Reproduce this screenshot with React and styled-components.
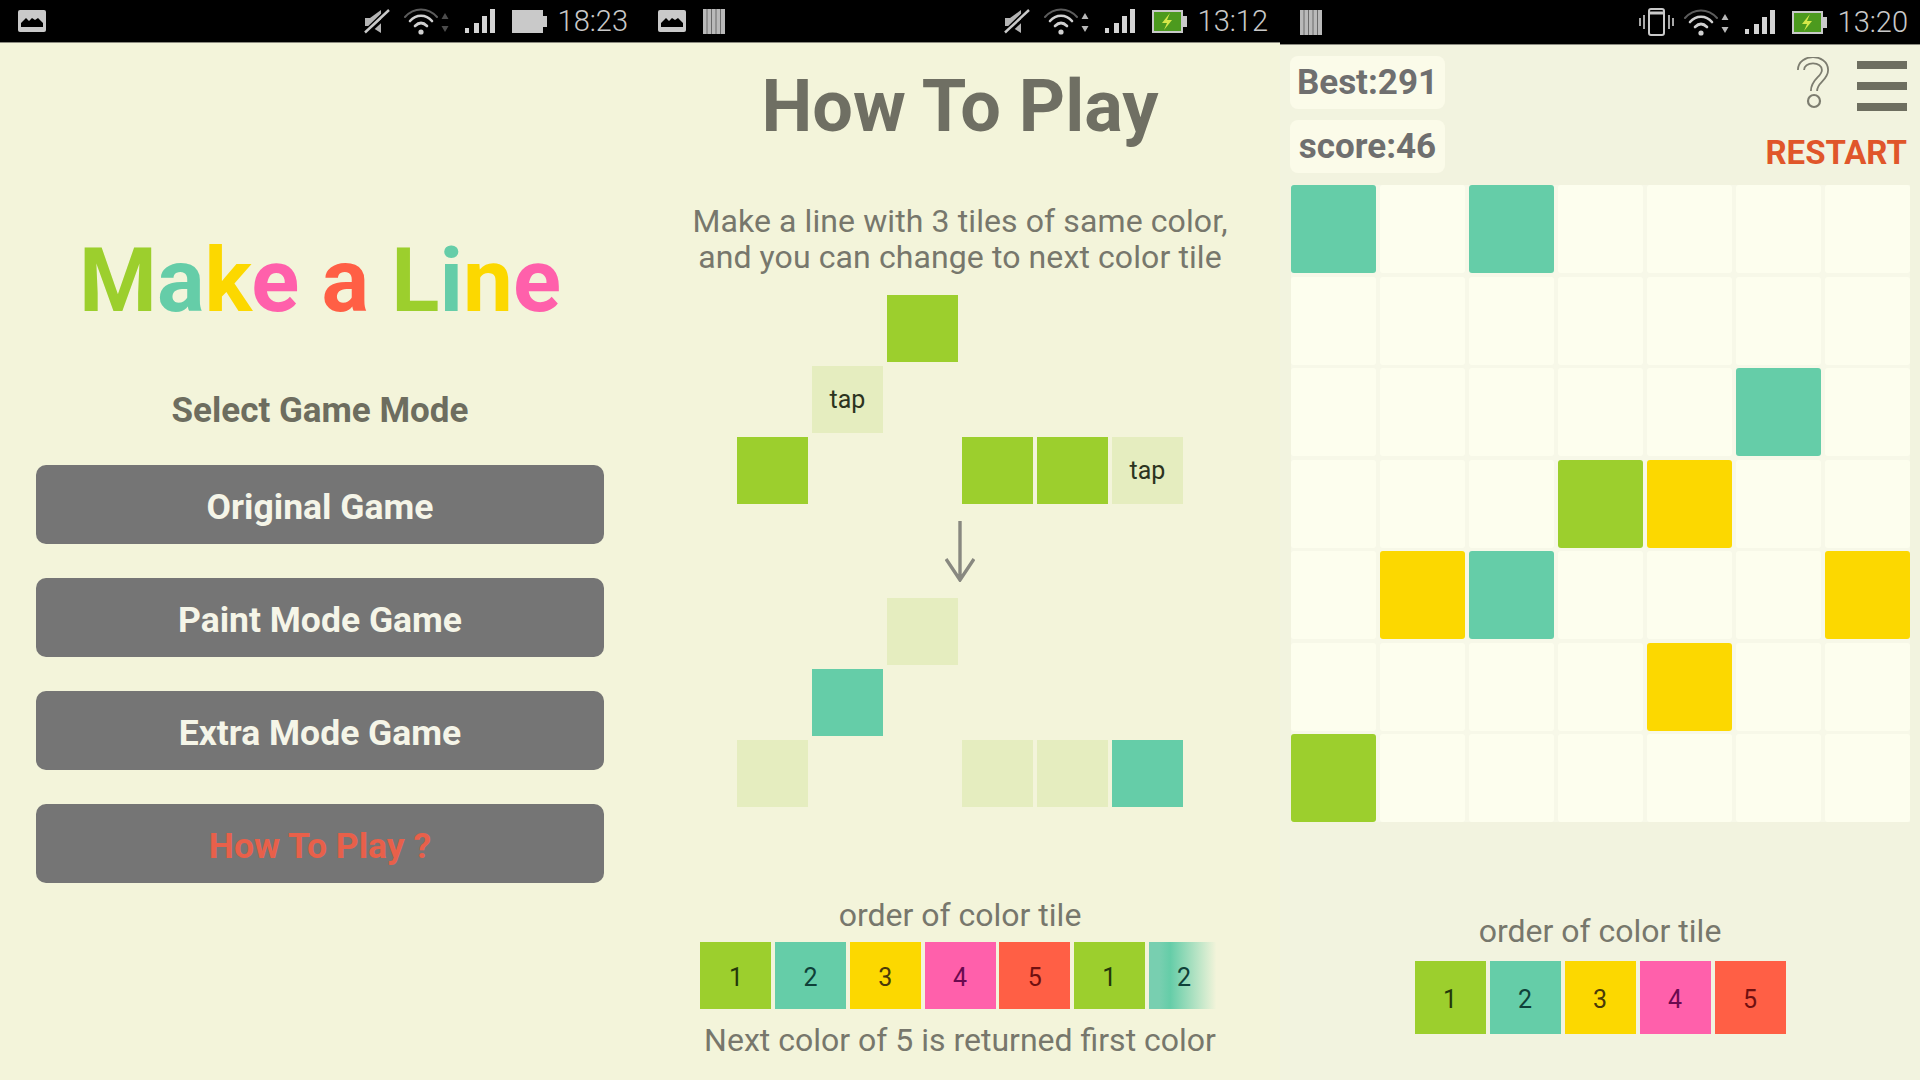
import styled, { createGlobalStyle } from "styled-components";

const GREEN = "#9ccf2d";
const TEAL = "#65cda8";
const YELLOW = "#fcd800";
const PINK = "#ff60ab";
const RED = "#ff5f45";
const PALE = "#e5edbf";

const tileColors = { g: GREEN, t: TEAL, y: YELLOW, p: PINK, r: RED, e: PALE };

const titleLetters = [
  ["M", GREEN],
  ["a", TEAL],
  ["k", YELLOW],
  ["e", PINK],
  [" ", GREEN],
  ["a", RED],
  [" ", GREEN],
  ["L", GREEN],
  ["i", TEAL],
  ["n", YELLOW],
  ["e", PINK],
];

const modes = [
  { label: "Original Game" },
  { label: "Paint Mode Game" },
  { label: "Extra Mode Game" },
  { label: "How To Play ?", hot: true },
];

const beforeTiles = [
  ["", "", "g", "", "", ""],
  ["", "tap", "", "", "", ""],
  ["g", "", "", "g", "g", "tap"],
];

const afterTiles = [
  ["", "", "e", "", "", ""],
  ["", "t", "", "", "", ""],
  ["e", "", "", "e", "e", "t"],
];

const order = [
  { n: 1, c: GREEN, ink: "#24380a" },
  { n: 2, c: TEAL, ink: "#0f4038" },
  { n: 3, c: YELLOW, ink: "#4a3a08" },
  { n: 4, c: PINK, ink: "#6a0a50" },
  { n: 5, c: RED, ink: "#701010" },
];

const board = [
  "t.t....",
  ".......",
  ".....t.",
  "...gy..",
  ".yt...y",
  "....y..",
  "g......",
];

const GlobalStyle = createGlobalStyle`
  body {
    margin: 0;
    background: #f3f4da;
    font-family: Roboto, "Liberation Sans", sans-serif;
  }
`;

const Screens = styled.div`
  display: flex;
  width: 1920px;
  height: 1080px;
  overflow: hidden;
`;

const Phone = styled.section`
  width: 640px;
  height: 1080px;
  display: flex;
  flex-direction: column;
  align-items: center;
  background: ${(p) => (p.$game ? "#f2f3df" : "#f3f4da")};
`;

const StatusBar = styled.div`
  align-self: stretch;
  height: ${(p) => (p.$tall ? 45 : 43)}px;
  flex: none;
  background: #000;
  border-bottom: 1px solid #8b8b80;
  box-sizing: border-box;
  display: flex;
  align-items: center;
  padding: 0 12px 0 ${(p) => (p.$tall ? 20 : 18)}px;
  color: #c9c9c9;
`;

const LeftIcons = styled.div`
  display: flex;
  align-items: center;
  gap: 17px;
  flex: 1;
`;

const RightIcons = styled.div`
  display: flex;
  align-items: center;
`;

const IconSlot = styled.div`
  display: flex;
  margin-right: ${(p) => p.$after}px;
`;

const Clock = styled.span`
  font-size: 29px;
  font-weight: 300;
  line-height: 1;
`;

const Title = styled.h1`
  margin: 196px 0 0;
  font-size: 89px;
  line-height: 84px;
  font-weight: 700;
  white-space: pre;
`;

const Letter = styled.span`
  color: ${(p) => p.$color};
`;

const Subtitle = styled.div`
  margin-top: 66px;
  padding-top: 2px;
  height: 38px;
  line-height: 40px;
  font-size: 35px;
  font-weight: 700;
  color: #6d6d5f;
`;

const Modes = styled.div`
  margin-top: 36px;
  display: flex;
  flex-direction: column;
  gap: 34px;
`;

const ModeButton = styled.button`
  width: 568px;
  height: 79px;
  border: none;
  border-radius: 10px;
  background: #757575;
  color: ${(p) => (p.$hot ? "#e8604a" : "#f5f5e8")};
  font-family: inherit;
  font-size: 35.5px;
  font-weight: 700;
  padding: 4px 0 0;
`;

const PageHeading = styled.h2`
  margin: 24px 0 0;
  height: 79px;
  line-height: 80px;
  font-size: 72px;
  font-weight: 700;
  color: #6f6f63;
`;

const Blurb = styled.p`
  margin: 57px 0 0;
  font-size: 32px;
  letter-spacing: 0.1px;
  line-height: 36px;
  text-align: center;
  color: #77776c;
`;

const TileGrid = styled.div`
  margin-top: ${(p) => p.$top}px;
  display: grid;
  grid-template-columns: repeat(6, 71px);
  grid-auto-rows: 67px;
  gap: 4px;
`;

const Tile = styled.div`
  background: ${(p) => p.$color || "transparent"};
  display: flex;
  align-items: center;
  justify-content: center;
  font-size: 25px;
  color: #2c3420;
`;

const ArrowIcon = styled.svg`
  display: block;
  margin-top: 17px;
`;

const Caption = styled.div`
  height: 36px;
  line-height: 36px;
  margin-top: ${(p) => p.$top}px;
  font-size: 32px;
  color: #77776c;
  white-space: nowrap;
`;

const OrderRow = styled.div`
  display: flex;
  gap: ${(p) => p.$gap}px;
  margin-top: ${(p) => p.$top}px;
`;

const OrderTile = styled.div`
  width: 71px;
  height: ${(p) => p.$height}px;
  box-sizing: border-box;
  padding-top: 3px;
  background: ${(p) =>
    p.$fade ? `linear-gradient(to right, #78cfb0 15%, ${p.$color} 30%, #f3f4da 95%)` : p.$color};
  color: ${(p) => p.$ink};
  display: flex;
  align-items: center;
  justify-content: center;
  font-size: 25px;
`;

const GameHeader = styled.div`
  align-self: stretch;
  display: flex;
  justify-content: space-between;
  padding: 11px 13px 0 10px;
`;

const Scores = styled.div`
  display: flex;
  flex-direction: column;
  gap: 11px;
`;

const ScorePill = styled.div`
  width: 155px;
  height: 53px;
  box-sizing: border-box;
  background: #fbfbe9;
  border-radius: 8px;
  color: #6f6f6f;
  font-size: 35px;
  font-weight: 700;
  line-height: 53px;
  text-align: center;
  white-space: nowrap;
`;

const GameActions = styled.div`
  display: flex;
  flex-direction: column;
  align-items: flex-end;
`;

const ActionIcons = styled.div`
  display: flex;
  align-items: center;
  gap: 28px;
  height: 54px;
`;

const Burger = styled.div`
  width: 50px;
  display: flex;
  flex-direction: column;
  gap: 13px;
  margin-top: 6px;
`;

const BurgerBar = styled.div`
  height: 8px;
  background: #6e6e60;
`;

const Restart = styled.div`
  margin-top: 24px;
  font-size: 33px;
  line-height: 38px;
  font-weight: 700;
  color: #e0562a;
  white-space: nowrap;
`;

const Board = styled.div`
  margin: 12px 10px 0 11px;
  align-self: flex-start;
  display: grid;
  grid-template-columns: repeat(7, 85px);
  grid-auto-rows: 88px;
  column-gap: 4px;
  row-gap: 3.5px;
  background: #f7f8e8;
`;

const Cell = styled.div`
  background: ${(p) => p.$color || "#fdfeee"};
  border-radius: 3px;
`;

const ImageGlyph = () => (
  <svg width="28" height="22" viewBox="0 0 28 22">
    <rect x="0" y="0" width="28" height="22" rx="2" fill="#c9c9c9" />
    <path d="M3 17V13l5-5 3 3 3-3 3 2 3-2 5 5v4z" fill="#000" />
  </svg>
);

const BarsGlyph = () => (
  <svg width="22" height="25" viewBox="0 0 22 25">
    <path d="M0 0h22v25H0z" fill="#b9b9b9" />
    <path d="M4 0v25M8.5 0v25M13 0v25M17.5 0v25" stroke="#6a6a6a" strokeWidth="1" />
  </svg>
);

const MuteGlyph = () => (
  <svg width="27" height="25" viewBox="0 0 27 25">
    <path d="M2 9h5l11-8v23l-11-7H2z" fill="#b4b4b4" />
    <path d="M0 24L24 1M4 25L27 4" stroke="#000" strokeWidth="3" />
    <path d="M2 23.5L26 1" stroke="#c9c9c9" strokeWidth="2.4" />
  </svg>
);

const VibrateGlyph = () => (
  <svg width="35" height="28" viewBox="0 0 35 28">
    <rect x="10" y="1" width="15" height="26" rx="2" fill="none" stroke="#c9c9c9" strokeWidth="2" />
    <path d="M11 5h13" stroke="#c9c9c9" strokeWidth="3" />
    <path d="M1 10v8M5 7v14M30 7v14M34 10v8" stroke="#a8a8a8" strokeWidth="2" />
  </svg>
);

const WifiGlyph = ({ dim }) => (
  <svg width="45" height="27" viewBox="0 0 45 27">
    <g fill="none" strokeLinecap="round">
      <path d="M1 9C10 -1 24 -1 33 9" stroke="#5c5c5c" strokeWidth="2" />
      <path d="M6 13C12 6 22 6 28 13" stroke="#d0d0d0" strokeWidth="2.6" />
      <path d="M11 18c4-4 8-4 12 0" stroke="#d0d0d0" strokeWidth="2.6" />
    </g>
    <circle cx="17" cy="24" r="2.6" fill="#d0d0d0" />
    <path d="M41 5l3.5 6h-7zM41 24l-3.5-6h7z" fill={dim ? "#4c4c4c" : "#b8b8b8"} />
  </svg>
);

const SignalGlyph = () => (
  <svg width="30" height="24" viewBox="0 0 30 24">
    <path d="M0 19h4v5H0zM9 14h5v10H9zM17 7h5v17h-5zM25 0h5v24h-5z" fill="#d4d4d4" />
  </svg>
);

const BatteryGlyph = ({ charging }) => (
  <svg width="35" height="23" viewBox="0 0 35 23">
    <path d="M0 0h31v6h4v11h-4v6H0z" fill="#c9c9c9" />
    {charging && (
      <>
        <rect x="2" y="2" width="27" height="19" fill="#4c9a1e" />
        <path d="M18 3l-8 10h5l-3 7 8-10h-5z" fill="#d5e84a" />
      </>
    )}
  </svg>
);

const StatusIcons = ({ left, vibrate, charging, dim, time, tall }) => (
  <StatusBar $tall={tall}>
    <LeftIcons>
      {left.map((Glyph, i) => (
        <Glyph key={i} />
      ))}
    </LeftIcons>
    <RightIcons>
      <IconSlot $after={vibrate ? 10 : 14}>{vibrate ? <VibrateGlyph /> : <MuteGlyph />}</IconSlot>
      <IconSlot $after={16}>
        <WifiGlyph dim={dim} />
      </IconSlot>
      <IconSlot $after={17}>
        <SignalGlyph />
      </IconSlot>
      <IconSlot $after={11}>
        <BatteryGlyph charging={charging} />
      </IconSlot>
      <Clock>{time}</Clock>
    </RightIcons>
  </StatusBar>
);

const QuestionGlyph = () => (
  <svg width="32" height="52" viewBox="0 0 32 52">
    <g fill="none" strokeLinecap="butt">
      <path d="M4 13C4 0 28 0 28 13c0 9-11 10-11 21" stroke="#7d7d70" strokeWidth="8" />
      <path d="M4 13C4 0 28 0 28 13c0 9-11 10-11 21" stroke="#f2f3df" strokeWidth="4.4" />
    </g>
    <circle cx="17" cy="44" r="6" fill="#f2f3df" stroke="#7d7d70" strokeWidth="2.2" />
  </svg>
);

const DownArrow = () => (
  <ArrowIcon width="30" height="61" viewBox="0 0 30 61">
    <path d="M15 0v58M1 38l14 21 14-21" fill="none" stroke="#888880" strokeWidth="3.4" />
  </ArrowIcon>
);

const TilePattern = ({ rows, top }) => (
  <TileGrid $top={top}>
    {rows.flat().map((t, i) =>
      t === "tap" ? (
        <Tile key={i} $color={PALE}>
          tap
        </Tile>
      ) : (
        <Tile key={i} $color={tileColors[t]} />
      )
    )}
  </TileGrid>
);

function App() {
  const strip = [...order, order[0], order[1]];

  return (
    <Screens>
      <GlobalStyle />

      <Phone>
        <StatusIcons left={[ImageGlyph]} dim time="18:23" />
        <Title>
          {titleLetters.map(([ch, color], i) => (
            <Letter key={i} $color={color}>
              {ch}
            </Letter>
          ))}
        </Title>
        <Subtitle>Select Game Mode</Subtitle>
        <Modes>
          {modes.map((m) => (
            <ModeButton key={m.label} $hot={m.hot}>
              {m.label}
            </ModeButton>
          ))}
        </Modes>
      </Phone>

      <Phone>
        <StatusIcons left={[ImageGlyph, BarsGlyph]} charging time="13:12" />
        <PageHeading>How To Play</PageHeading>
        <Blurb>
          Make a line with 3 tiles of same color,
          <br />
          and you can change to next color tile
        </Blurb>
        <TilePattern rows={beforeTiles} top={20} />
        <DownArrow />
        <TilePattern rows={afterTiles} top={16} />
        <Caption $top={90}>order of color tile</Caption>
        <OrderRow $gap={3.7} $top={9}>
          {strip.map((o, i) => (
            <OrderTile key={i} $color={o.c} $ink={o.ink} $height={67} $fade={i === 6}>
              {o.n}
            </OrderTile>
          ))}
        </OrderRow>
        <Caption $top={13}>Next color of 5 is returned first color</Caption>
      </Phone>

      <Phone $game>
        <StatusIcons left={[BarsGlyph]} vibrate charging time="13:20" tall />
        <GameHeader>
          <Scores>
            <ScorePill>Best:291</ScorePill>
            <ScorePill>score:46</ScorePill>
          </Scores>
          <GameActions>
            <ActionIcons>
              <QuestionGlyph />
              <Burger>
                <BurgerBar />
                <BurgerBar />
                <BurgerBar />
              </Burger>
            </ActionIcons>
            <Restart>RESTART</Restart>
          </GameActions>
        </GameHeader>
        <Board>
          {board.join("").split("").map((c, i) => (
            <Cell key={i} $color={tileColors[c]} />
          ))}
        </Board>
        <Caption $top={91}>order of color tile</Caption>
        <OrderRow $gap={4} $top={12}>
          {order.map((o) => (
            <OrderTile key={o.n} $color={o.c} $ink={o.ink} $height={73}>
              {o.n}
            </OrderTile>
          ))}
        </OrderRow>
      </Phone>
    </Screens>
  );
}

export default App;
